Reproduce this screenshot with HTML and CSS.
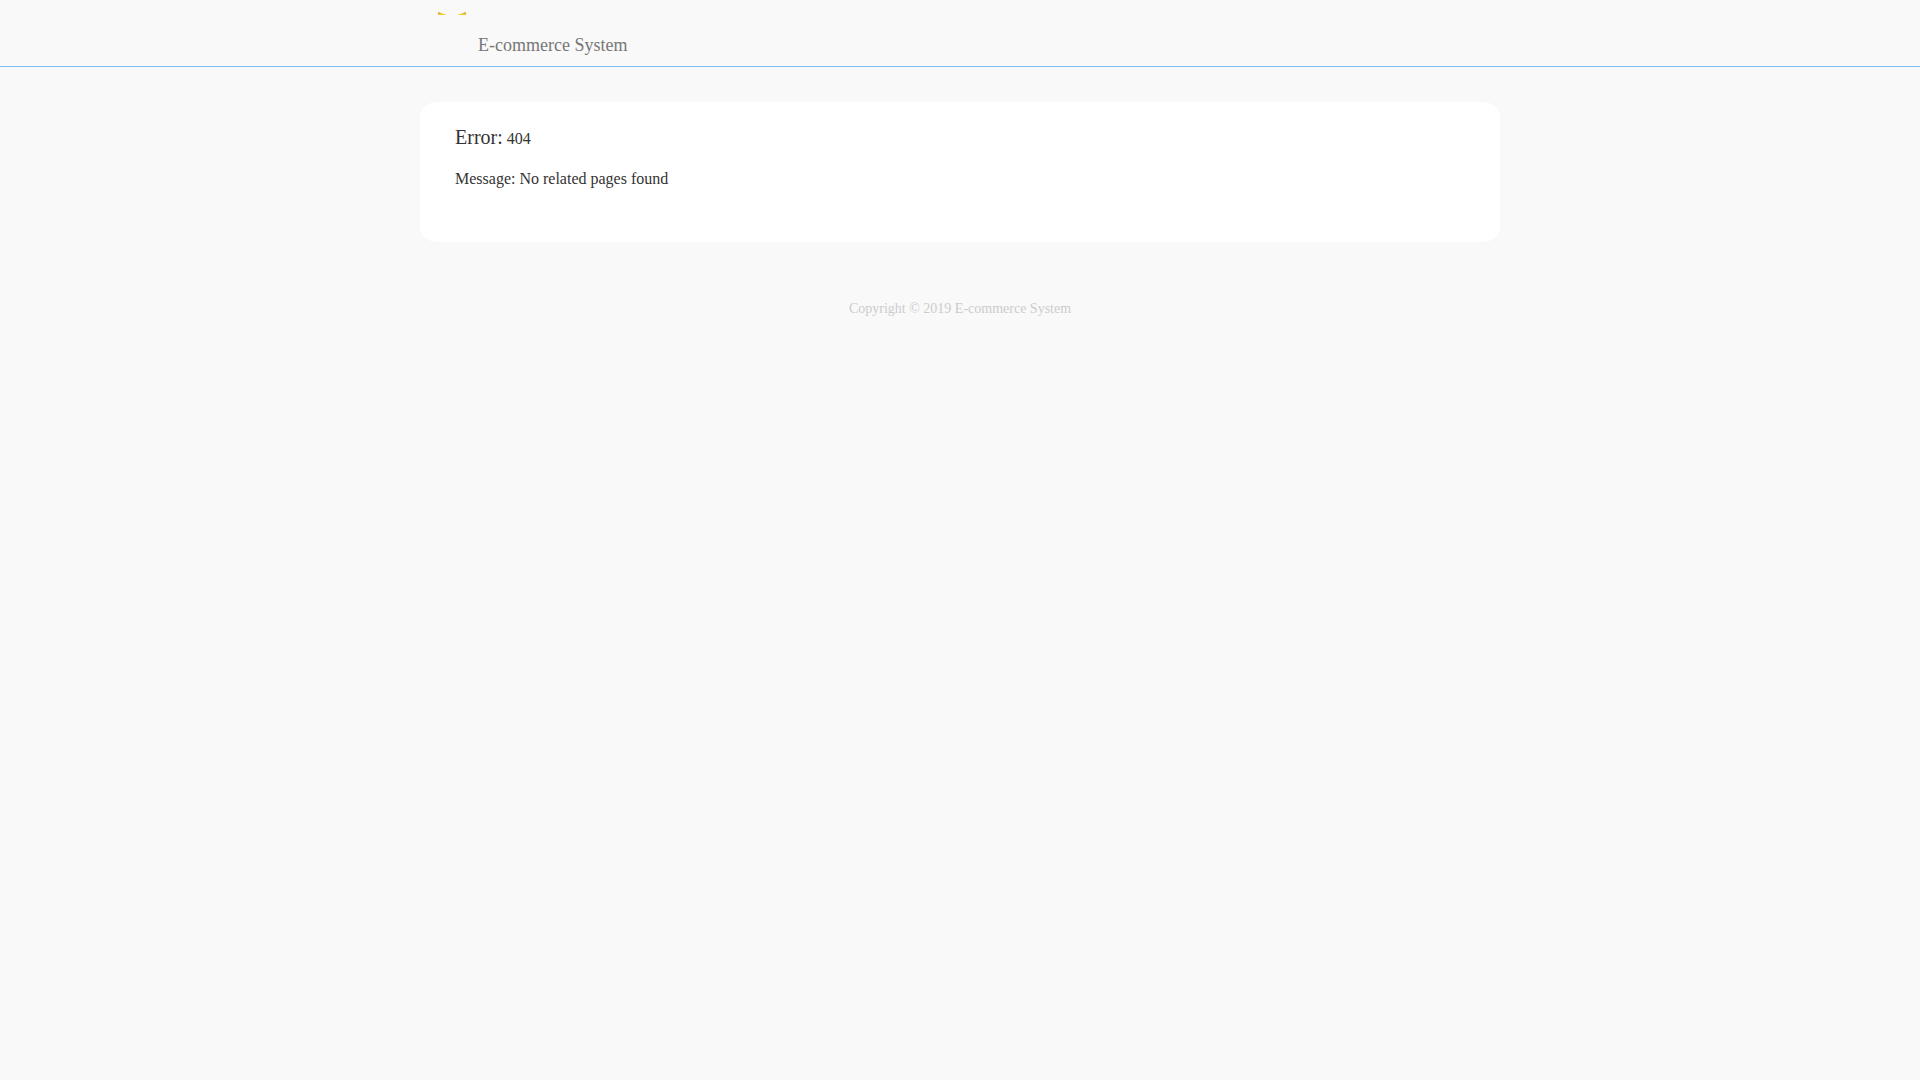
FILE: index.html
```html
<!DOCTYPE html>
<html lang="en">
<head>
<meta charset="utf-8">
<meta name="viewport" content="width=device-width, initial-scale=1">
<title>E-commerce System</title>
<link rel="stylesheet" href="styles.css">
</head>
<body>
<header class="header">
  <div class="header-inner">
    <svg class="logo" viewBox="0 0 28 28" aria-hidden="true">
      <path fill="#f8cc28" d="M0 0 9 3H0ZM28 0 19 3H28Z"/>
      <path fill="#e0ae48" d="M0 0 3 1V2H0ZM28 0 25 1V2H28Z"/>
    </svg>
    <span class="brand">E-commerce System</span>
  </div>
</header>
<main class="card">
  <p class="line"><span class="label">Error:</span> 404</p>
  <p class="line">Message: No related pages found</p>
</main>
<footer class="footer">Copyright © 2019 E-commerce System</footer>
</body>
</html>
```
FILE: styles.css
```css
* {
  box-sizing: border-box;
}

body {
  margin: 0;
  background: #f9f9f9;
  color: #333;
  font: 16px/24px "Liberation Serif", serif;
}

.header {
  border-bottom: 1px solid #7dbfee;
}

.header-inner {
  display: flex;
  gap: 12px;
  max-width: 1080px;
  margin: 0 auto;
  padding: 12px 18px 6px;
}

.logo {
  width: 28px;
  height: 28px;
}

.brand {
  padding-top: 18px;
  color: #777;
  font-size: 18px;
  line-height: 30px;
}

.card {
  max-width: 1080px;
  min-height: 140px;
  margin: 35px auto 0;
  padding: 23px 35px;
  border-radius: 16px;
  background: #fff;
}

.line {
  margin: 0 0 16px;
}

.label {
  font-size: 20px;
}

.footer {
  margin-top: 55px;
  color: #ccc;
  font-size: 14px;
  text-align: center;
}
```
